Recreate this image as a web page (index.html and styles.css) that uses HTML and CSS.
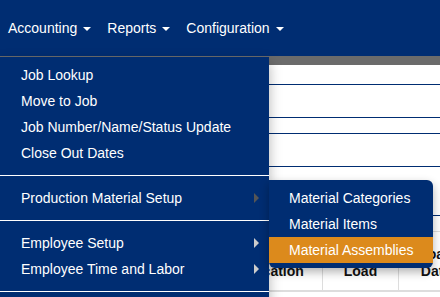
FILE: index.html
```html
<!DOCTYPE html>
<html>
<head>
<meta charset="utf-8">
<link rel="stylesheet" href="styles.css">
</head>
<body>
<nav class="navbar">
  <div class="nav-item">Accounting<span class="caret"></span></div>
  <div class="nav-item">Reports<span class="caret"></span></div>
  <div class="nav-item">Configuration<span class="caret"></span></div>
</nav>
<main class="page">
  <div class="toolbar"></div>
  <div class="row r1"></div>
  <div class="row r2"></div>
  <div class="row r3"></div>
  <div class="row r4"></div>
  <div class="row r5"></div>
  <table class="grid">
    <tr>
      <th class="c1">Allocation</th>
      <th class="c2">Load</th>
      <th class="c3">Load<br>Date</th>
    </tr>
  </table>
</main>
<ul class="dropdown">
  <li class="item">Job Lookup</li>
  <li class="item">Move to Job</li>
  <li class="item">Job Number/Name/Status Update</li>
  <li class="item">Close Out Dates</li>
  <li class="divider"></li>
  <li class="item sub open">Production Material Setup<span class="arrow"></span>
    <ul class="submenu">
      <li class="item">Material Categories</li>
      <li class="item">Material Items</li>
      <li class="item active">Material Assemblies</li>
    </ul>
  </li>
  <li class="divider"></li>
  <li class="item sub">Employee Setup<span class="arrow"></span></li>
  <li class="item sub">Employee Time and Labor<span class="arrow"></span></li>
  <li class="divider"></li>
</ul>
</body>
</html>
```
FILE: styles.css
```css
html, body {
  margin: 0;
  padding: 0;
  background: #fff;
  font-family: "Liberation Sans", Arial, sans-serif;
  font-size: 14px;
  height: 297px;
  overflow: hidden;
}
body {
  position: relative;
}
.navbar {
  height: 56px;
  background: #002d72;
  display: flex;
  align-items: center;
}
.nav-item {
  color: #fff;
  padding: 0 8px;
  line-height: 20px;
  display: flex;
  align-items: center;
}
.caret {
  display: inline-block;
  width: 0;
  height: 0;
  margin-left: 6px;
  margin-top: 1px;
  border-left: 4px solid transparent;
  border-right: 4px solid transparent;
  border-top: 4px solid #fff;
}
.page {
  display: flex;
  flex-direction: column;
  align-items: flex-start;
}
.toolbar {
  height: 9px;
  background: #6b6b6b;
  align-self: stretch;
}
.row {
  align-self: stretch;
  border-bottom: 1px solid #002d72;
}
.r1 { height: 19px; }
.r2 { height: 32px; }
.r3 { height: 15px; }
.r4 { height: 32px; }
.r5 { height: 48px; }
.grid {
  flex-shrink: 0;
  width: 253px;
  min-width: 253px;
  table-layout: fixed;
  margin-top: 15px;
  margin-left: 218px;
  border-collapse: collapse;
  border-top: 1px solid #ddd;
  border-bottom: 2px solid #ddd;
}
.grid th {
  height: 48px;
  vertical-align: bottom;
  padding: 0 4px 10px;
  text-align: center;
  font-weight: bold;
  color: #111;
  line-height: 17px;
  border-right: 1px solid #ddd;
}
.grid .c1 { width: 96px; }
.grid .c2 { width: 67px; }
.grid .c3 { width: 66px; }
.dropdown {
  position: absolute;
  top: 56px;
  left: 0;
  width: 269px;
  margin: 0;
  padding: 5px 0 20px;
  list-style: none;
  background: #002d72;
  border-top: 1px solid #666;
  box-shadow: 0 6px 12px rgba(0,0,0,.3);
  box-sizing: border-box;
}
.item {
  position: relative;
  color: #fff;
  height: 26px;
  line-height: 26px;
  padding: 0 21px;
  white-space: nowrap;
}
.divider {
  height: 1px;
  margin: 9px 0;
  background: #fff;
}
.arrow {
  position: absolute;
  right: 10px;
  top: 8px;
  width: 0;
  height: 0;
  border-top: 5px solid transparent;
  border-bottom: 5px solid transparent;
  border-left: 5px solid #ccc;
}
.open > .arrow {
  border-left-color: #555;
}
.submenu {
  position: absolute;
  left: 100%;
  top: -5px;
  width: 164px;
  margin: 0;
  padding: 5px 0;
  list-style: none;
  background: #002d72;
  border-radius: 0 6px 6px 6px;
  box-shadow: 0 4px 10px rgba(0,0,0,.3);
}
.submenu .item {
  padding: 0 20px;
}
.submenu .active {
  background: #dc8a1c;
}
```
